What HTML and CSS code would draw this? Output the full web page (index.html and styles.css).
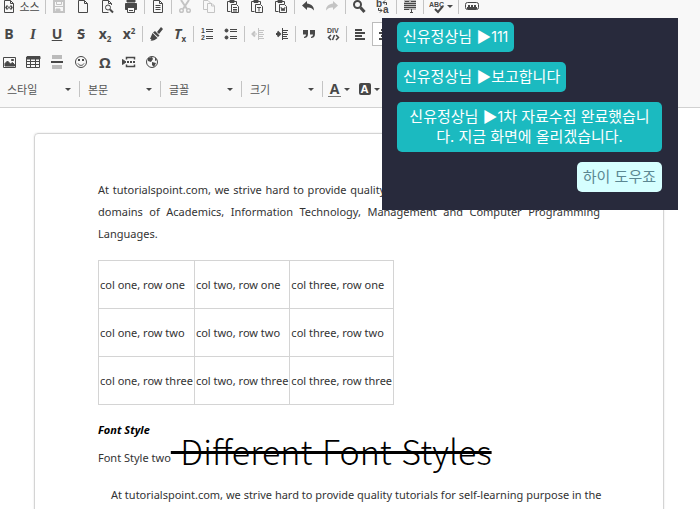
FILE: index.html
```html
<!DOCTYPE html>
<html lang="ko">
<head>
<meta charset="utf-8">
<title>문서 편집기</title>
<link rel="stylesheet" href="styles.css">
</head>
<body>
<div class="toolbar" role="toolbar" aria-label="편집 도구">
  <div class="row">
    <button class="tool source"><svg class="icon" viewBox="0 0 16 16"><path d="M3.500 2.500h6l3 3v9h-9z M9.500 2.500v3h3"/><path stroke-width="1.500" d="M6.500 7.500L5 9.500l1.500 2M9.500 7.500L11 9.500l-1.500 2M8 8.500v2"/></svg><span>소스</span></button>
    <span class="sep"></span>
    <button class="tool off" aria-label="저장"><svg class="icon" viewBox="0 0 16 16"><path stroke-width="2" d="M3 3h10v11H3z"/><path d="M5.500 3v3.500h5V3M3 8.500h10"/><path fill="currentColor" d="M5 11h4v3H5z"/></svg></button>
    <button class="tool" aria-label="새 문서"><svg class="icon" viewBox="0 0 16 16"><path d="M3.500 2.500h6l3 3v9h-9z M9.500 2.500v3h3"/></svg></button>
    <button class="tool" aria-label="미리보기"><svg class="icon" viewBox="0 0 16 16"><path d="M12.500 7V5.500l-3-3h-6v12h6M9.500 2.500v3h3"/><circle cx="9" cy="9.500" r="2.500"/><path stroke-width="2" d="M11 11.500l3 3"/></svg></button>
    <button class="tool" aria-label="인쇄"><svg class="icon" viewBox="0 0 16 16"><path fill="currentColor" d="M4 2h8v2H4zM2.500 5.500h11v6h-2V9h-7v2.500h-2z"/><path d="M4.500 9.500h7v5h-7zM6 12.500h4"/></svg></button>
    <span class="sep"></span>
    <button class="tool" aria-label="템플릿"><svg class="icon" viewBox="0 0 16 16"><path d="M3.500 2.500h6l3 3v9h-9z M9.500 2.500v3h3M5.500 7.500h5M5.500 9.500h5M5.500 11.500h5"/></svg></button>
    <span class="sep"></span>
    <button class="tool off" aria-label="잘라내기"><svg class="icon" viewBox="0 0 16 16"><path stroke-width="2" d="M4 2l6 9M12 2l-6 9"/><circle cx="4.500" cy="12.500" r="1.800" stroke-width="1.500"/><circle cx="11.500" cy="12.500" r="1.800" stroke-width="1.500"/></svg></button>
    <button class="tool off" aria-label="복사"><svg class="icon" viewBox="0 0 16 16"><path d="M6 11.500H2.500v-9H7L9.500 5M6.500 5.500H11L13.500 8v6.500h-7z M10.500 5.500V8h3"/></svg></button>
    <button class="tool" aria-label="붙여넣기"><svg class="icon" viewBox="0 0 16 16"><path d="M5.500 13.500h-3v-10h9V6"/><path fill="currentColor" d="M5 1.500h4v3H5z"/><path d="M6.500 6.500h5l2 2v6h-7zM8 9.500h4M8 11.500h4M8 13h4"/></svg></button>
    <button class="tool" aria-label="텍스트로 붙여넣기"><svg class="icon" viewBox="0 0 16 16"><path d="M5.500 13.500h-3v-10h9V6"/><path fill="currentColor" d="M5 1.500h4v3H5z"/><path d="M6.500 6.500h5l2 2v6h-7zM8 9.500h4M10 9.500v4"/></svg></button>
    <button class="tool" aria-label="워드에서 붙여넣기"><svg class="icon" viewBox="0 0 16 16"><path d="M5.500 13.500h-3v-10h9V6"/><path fill="currentColor" d="M5 1.500h4v3H5z"/><path d="M6.500 6.500h5l2 2v6h-7zM8 9l1 4 1-3 1 3 1-4"/></svg></button>
    <span class="sep"></span>
    <button class="tool" aria-label="실행 취소"><svg class="icon solid" viewBox="0 0 16 16"><path d="M7 3L2 7.500 7 12V9.500c3-.5 5 .5 7 3C14 8 11 6 7 5.500z"/></svg></button>
    <button class="tool off" aria-label="다시 실행"><svg class="icon solid" viewBox="0 0 16 16"><path d="M9 3l5 4.500L9 12V9.500c-3-.5-5 .5-7 3C2 8 5 6 9 5.500z"/></svg></button>
    <span class="sep"></span>
    <button class="tool" aria-label="찾기"><svg class="icon" viewBox="0 0 16 16"><circle cx="6.500" cy="6.500" r="3.500" stroke-width="2"/><path stroke-width="3" d="M9.500 9.500l4 4.500"/></svg></button>
    <button class="tool" aria-label="바꾸기"><svg class="icon" viewBox="0 0 16 16"><path d="M8 4.500h3.500V7M10 2.500l-2 2 2 2M3.500 10v2.500H7M5 10.500l2 2-2 2"/><text x="1" y="9" class="glyph-lg">b</text><text x="8" y="15" class="glyph-lg">a</text></svg></button>
    <span class="sep"></span>
    <button class="tool" aria-label="모두 선택"><svg class="icon" viewBox="0 0 16 16"><path class="shade" d="M2 2h12v10H2z"/><path d="M3 3.500h4M2 5.500h12M2 7.500h12M2 9.500h12M9 3.500h5M2 11.500h5M9.500 11v4M8 14.500h3"/></svg></button>
    <span class="sep"></span>
    <button class="tool menu" aria-label="맞춤법 검사"><svg class="icon" viewBox="0 0 16 16"><text x="0" y="9" class="glyph-md">ABC</text><path stroke-width="2" d="M6 11l3 3 5-6"/></svg><i class="arrow"></i></button>
    <span class="sep"></span>
    <button class="tool" aria-label="버튼 넣기"><svg class="icon" viewBox="0 0 16 16"><rect x="1.500" y="4.500" width="13" height="7" rx="2"/><path stroke-width="2" d="M3 10h10M4 8h2M7 8h2M10 8h2"/></svg></button>
  </div>
  <div class="row">
    <button class="tool letter bold">B</button>
    <button class="tool letter italic">I</button>
    <button class="tool letter under">U</button>
    <button class="tool letter strike">S</button>
    <button class="tool letter script">x<sub>2</sub></button>
    <button class="tool letter script">x<sup>2</sup></button>
    <span class="sep"></span>
    <button class="tool" aria-label="서식 복사"><svg class="icon solid" viewBox="0 0 16 16"><path d="M13 1l2 2-4 5-2-2zM7 5l4.500 4.500L10 11 5 6.500zM4.500 7l5 5c-2 2-5 3-7 2.500l1-1.500L2 13z"/></svg></button>
    <button class="tool letter clear"><em>T</em><sub>x</sub></button>
    <span class="sep"></span>
    <button class="tool" aria-label="번호 목록"><svg class="icon" viewBox="0 0 16 16"><text x="2" y="7" class="glyph-md">1</text><text x="2" y="14" class="glyph-md">2</text><path d="M7 3.500h7M7 5.500h7M7 10.500h7M7 12.500h7"/></svg></button>
    <button class="tool" aria-label="글머리 목록"><svg class="icon" viewBox="0 0 16 16"><circle cx="3.500" cy="4.500" r="1.500" fill="currentColor"/><circle cx="3.500" cy="11.500" r="1.500" fill="currentColor"/><path d="M7 3.500h7M7 5.500h7M7 10.500h7M7 12.500h7"/></svg></button>
    <span class="sep"></span>
    <button class="tool off" aria-label="내어쓰기"><svg class="icon" viewBox="0 0 16 16"><path d="M8.500 2v12M8 4.500h6M8 6.500h5M8 8.500h6M8 10.500h5M8 12.500h6M2 8h5"/><path stroke-width="2" d="M5 5.500L2.500 8 5 10.500"/></svg></button>
    <button class="tool" aria-label="들여쓰기"><svg class="icon" viewBox="0 0 16 16"><path d="M8.500 2v12M8 4.500h6M8 6.500h5M8 8.500h6M8 10.500h5M8 12.500h6"/><path stroke-width="2" d="M2 8h4M3.500 5.500L6 8l-2.500 2.500"/></svg></button>
    <span class="sep"></span>
    <button class="tool" aria-label="인용"><svg class="icon solid" viewBox="0 0 16 16"><path d="M2 4h5v4c0 3-2 4-4 4v-1c1-.5 2-1 2-2.500H2zM9 4h5v4c0 3-2 4-4 4v-1c1-.5 2-1 2-2.500H9z"/></svg></button>
    <button class="tool" aria-label="DIV"><svg class="icon" viewBox="0 0 16 16"><text x="2" y="7" class="glyph-md">DIV</text><path stroke-width="1.500" d="M6 9l-2.500 2.500L6 14M11 9l2.500 2.500L11 14M9.500 9l-2 5"/></svg></button>
    <span class="sep"></span>
    <button class="tool" aria-label="왼쪽 정렬"><svg class="icon" viewBox="0 0 16 16"><path stroke-width="2" d="M3 4h7M3 7h10M3 10h7M3 13h10"/></svg></button>
    <button class="tool active" aria-label="가운데 정렬"><svg class="icon" viewBox="0 0 16 16"><path stroke-width="2" d="M5 4h6M3 7h10M5 10h6M3 13h10"/></svg></button>
  </div>
  <div class="row">
    <button class="tool" aria-label="이미지"><svg class="icon" viewBox="0 0 16 16"><path d="M2.500 3.500h12v10h-12z"/><path fill="currentColor" d="M4 12V9.500L6.500 7l3 3 2-1.500 2 2V12zM10.500 5.500h2v1h-2z"/></svg></button>
    <button class="tool" aria-label="표"><svg class="icon" viewBox="0 0 16 16"><path fill="currentColor" d="M2 2.500h13V5H2z"/><path d="M1.500 3v10.500h13V3M2 7.500h13M2 10.500h13M5.500 5v8.500M10.500 5v8.500"/></svg></button>
    <button class="tool" aria-label="가로줄"><svg class="icon" viewBox="0 0 16 16"><path class="shade" d="M3 1h10v4H3zM3 11h10v4H3z"/><path stroke-width="2" d="M2 8h12"/></svg></button>
    <button class="tool" aria-label="이모티콘"><svg class="icon" viewBox="0 0 16 16"><circle cx="8" cy="8" r="5.500"/><path d="M5 9.500c1.500 2.500 4.500 2.500 6 0"/><path stroke-width="2" d="M6 5v2M10 5v2"/></svg></button>
    <button class="tool letter omega">Ω</button>
    <button class="tool" aria-label="페이지 나누기"><svg class="icon" viewBox="0 0 16 16"><path fill="currentColor" d="M1.500 5.500L5 8l-3.500 2.500z"/><path stroke-width="1.500" d="M5.500 5.500v-2h8v2M5.500 10.500v2h8v-2"/><path stroke-width="2" d="M6 8h2M9 8h2M12 8h2"/></svg></button>
    <button class="tool" aria-label="프레임"><svg class="icon" viewBox="0 0 16 16"><circle cx="7" cy="8" r="5.500"/><path fill="currentColor" stroke="none" d="M3 4l4-1 1 2-2 3-3-1zM7 8l4 1-2 4-2-2zM10 3l2 3-2 1z"/></svg></button>
  </div>
  <div class="row combos">
    <label class="combo"><select aria-label="스타일"><option>스타일</option></select></label>
    <span class="sep"></span>
    <label class="combo"><select aria-label="본문"><option>본문</option></select></label>
    <span class="sep"></span>
    <label class="combo"><select aria-label="글꼴"><option>글꼴</option></select></label>
    <span class="sep"></span>
    <label class="combo"><select aria-label="크기"><option>크기</option></select></label>
    <span class="sep"></span>
    <button class="tool letter color"><span class="ink">A</span><i class="arrow"></i></button>
    <button class="tool letter color"><span class="fill">A</span><i class="arrow"></i></button>
  </div>
</div>

<main class="sheet">
  <p class="justified">At tutorialspoint.com, we strive hard to provide quality tutorials for self-learning purpose in the domains of Academics, Information Technology, Management and Computer Programming Languages.</p>
  <table class="grid">
    <tr><td>col one, row one</td><td>col two, row one</td><td>col three, row one</td></tr>
    <tr><td>col one, row two</td><td>col two, row two</td><td>col three, row two</td></tr>
    <tr><td>col one, row three</td><td>col two, row three</td><td>col three, row three</td></tr>
  </table>
  <h2 class="heading">Font Style</h2>
  <p class="styles"><span>Font Style two</span><s class="big">&nbsp;Different Font Styles</s></p>
  <p class="indented">At tutorialspoint.com, we strive hard to provide quality tutorials for self-learning purpose in the</p>
</main>

<aside class="chat">
  <p class="bubble">신유정상님 ▶<span class="num">111</span></p>
  <p class="bubble">신유정상님 ▶보고합니다</p>
  <p class="bubble">신유정상님 ▶<span class="num">1</span>차 자료수집 완료했습니다. 지금 화면에 올리겠습니다.</p>
  <p class="bubble mine">하이 도우죠</p>
</aside>
</body>
</html>
```

FILE: styles.css
```css
* { box-sizing: border-box; }

body {
  margin: 0;
  min-height: 100vh;
  overflow: hidden;
  background: #fff;
  color: #333;
  font: 12px/22px "Noto Sans", "Noto Sans CJK KR", sans-serif;
}

/* Toolbar */
.toolbar {
  margin-top: -8px;
  height: 116px;
  background: #f8f8f8;
  border-bottom: 1px solid #d1d1d1;
}

.row {
  display: flex;
  align-items: center;
  height: 28px;
  margin-left: -3px;
}

.combos {
  height: 26px;
  margin-left: 0;
}

.tool {
  display: flex;
  flex: none;
  align-items: center;
  justify-content: center;
  width: 24px;
  height: 24px;
  padding: 0;
  border: 0;
  background: none;
  color: #484848;
  font: 11px/16px "Noto Sans CJK KR", sans-serif;
}

.source { width: 47px; gap: 2px; line-height: 12px; }
.menu { width: 32px; gap: 2px; }
.off { color: #c4c4c4; }
.active { background: #fff; border: 1px solid #bcbcbc; }

.sep {
  flex: none;
  width: 1px;
  height: 16px;
  margin: 0 1px;
  background: #c4c4c4;
}

.icon {
  flex: none;
  width: 16px;
  height: 16px;
  fill: none;
  stroke: currentColor;
  stroke-width: 1;
}

.solid { fill: currentColor; stroke: none; }
.icon .shade { fill: #bbb; stroke: none; }

.icon text {
  fill: currentColor;
  stroke: none;
  font-family: "Liberation Sans", sans-serif;
  font-weight: bold;
}

.glyph-md { font-size: 7px; }
.glyph-lg { font-size: 10px; }

.letter { font: bold 14px/16px "Open Sans", sans-serif; }
.italic { font-family: "Liberation Serif", serif; font-style: italic; font-size: 15px; }
.under { text-decoration: underline; }
.strike { text-decoration: line-through; }
.letter sub, .letter sup { font-size: 8px; line-height: 8px; }
.letter sub { align-self: flex-end; margin-bottom: 3px; }
.letter sup { align-self: flex-start; margin-top: 5px; }
.omega { font-size: 15px; }

.arrow {
  border: 3px solid transparent;
  border-top-color: #484848;
  border-bottom: 0;
}

.color { width: 30px; gap: 3px; }
.ink { width: 13px; border-bottom: 1px solid #777; line-height: 14px; }
.fill {
  width: 12px;
  border-radius: 2px;
  background: #484848;
  color: #fff;
  font-size: 11px;
  line-height: 12px;
}

.combo {
  position: relative;
  flex: none;
  width: 78px;
}

.combo::after {
  content: "";
  position: absolute;
  top: 10px;
  right: 7px;
  border: 3px solid transparent;
  border-top-color: #484848;
  border-bottom: 0;
}

.combo select {
  appearance: none;
  width: 100%;
  height: 22px;
  padding: 0 7px;
  border: 0;
  background: none;
  color: #555;
  font: 11px/16px "Noto Sans CJK KR", sans-serif;
}

/* Document */
.sheet {
  margin: 25px 36px 0 34px;
  padding: 45px 63px 0;
  min-height: 400px;
  border: 1px solid #d4d4d4;
  border-radius: 4px;
  box-shadow: 0 0 2px #ddd;
  font-size: 11px;
}

.sheet p { margin: 0; }
.justified { text-align: justify; }
.sheet .indented { margin: 10px 0 0 13px; white-space: nowrap; }

.grid {
  margin: 15px 0 14px;
  border-collapse: collapse;
}

.grid td {
  height: 48px;
  padding: 0 1px;
  border: 1px solid #d4d4d4;
  white-space: nowrap;
}

.heading {
  margin: 0;
  color: #000;
  font-size: 11px;
  font-style: italic;
  line-height: 22px;
}

.styles {
  display: flex;
  align-items: flex-end;
  height: 33px;
}

.styles span { line-height: 32px; }

.big {
  color: #000;
  font-family: "Noto Sans CJK KR", sans-serif;
  font-size: 34px;
  font-weight: 300;
  line-height: 46px;
  text-decoration-thickness: 3px;
  white-space: nowrap;
}

/* Chat overlay */
.chat {
  position: absolute;
  top: 18px;
  right: 22px;
  display: flex;
  flex-direction: column;
  align-items: flex-start;
  gap: 10px;
  width: 296px;
  padding: 4px 16px 18px 15px;
  background: #282a3c;
}

.bubble {
  margin: 0;
  padding: 4px 6px 6px;
  border-radius: 5px;
  background: #1bbac0;
  color: #fff;
  font: 15px/20px "Noto Sans CJK KR", sans-serif;
  text-align: center;
  word-break: break-all;
}

.num { font-family: Inter, sans-serif; font-size: 14px; line-height: 14px; }

.mine {
  align-self: flex-end;
  background: #d6ffff;
  color: #5b8792;
}
```
